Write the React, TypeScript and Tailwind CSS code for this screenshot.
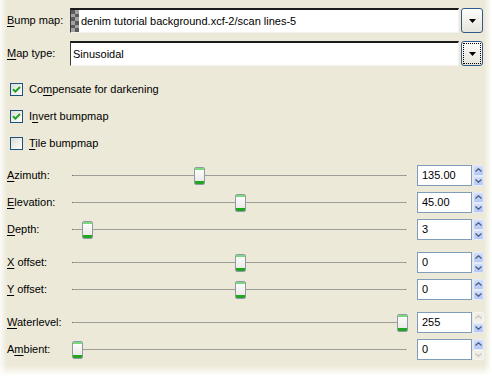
import React from 'react';

// slider rows, grouped like the dialog
const sliderGroups = [
  [
    { pre: '', key: 'A', post: 'zimuth:', value: '135.00', frac: 135 / 360, up: true, down: true },
    { pre: '', key: 'E', post: 'levation:', value: '45.00', frac: 0.5, up: true, down: true },
    { pre: '', key: 'D', post: 'epth:', value: '3', frac: 2 / 64, up: true, down: true },
  ],
  [
    { pre: '', key: 'X', post: ' offset:', value: '0', frac: 0.5, up: true, down: true },
    { pre: '', key: 'Y', post: ' offset:', value: '0', frac: 0.5, up: true, down: true },
  ],
  [
    { pre: '', key: 'W', post: 'aterlevel:', value: '255', frac: 1, up: false, down: true },
    { pre: 'A', key: 'm', post: 'bient:', value: '0', frac: 0, up: true, down: false },
  ],
];

const checks = [
  { pre: 'Co', key: 'm', post: 'pensate for darkening', checked: true },
  { pre: 'I', key: 'n', post: 'vert bumpmap', checked: true },
  { pre: '', key: 'T', post: 'ile bumpmap', checked: false },
];

function Label({ pre, k, post }: { pre: string; k: string; post: string }) {
  return (
    <span className="whitespace-pre">
      {pre}
      <span className="underline underline-offset-[2px]">{k}</span>
      {post}
    </span>
  );
}

function ComboButton({ focused }: { focused?: boolean }) {
  return (
    <div className="ml-[2px] mr-[1px] w-[22px] h-[25px] rounded-[3px] border border-[#2E5A8C] bg-gradient-to-b from-[#FDFDFB] to-[#E6E4DA] flex items-center justify-center">
      <div
        className={
          focused
            ? 'w-[18px] h-[21px] border border-dotted border-black flex items-center justify-center'
            : 'flex items-center justify-center'
        }
      >
        <svg width="7" height="4" viewBox="0 0 7 4">
          <path d="M0 0h7L3.5 4z" fill="#000" />
        </svg>
      </div>
    </div>
  );
}

function SpinHalf({ dir, enabled }: { dir: 'up' | 'down'; enabled: boolean }) {
  return (
    <div
      className={
        enabled
          ? 'flex-1 rounded-[2px] border border-[#E4EBFD] bg-gradient-to-b from-[#D2DEFC] to-[#B4C7F5] flex items-center justify-center'
          : 'flex-1 rounded-[2px] border border-[#F7F6F1] bg-[#EFEEE8] flex items-center justify-center'
      }
    >
      <svg width="7" height="4" viewBox="0 0 7 4">
        <path
          d={dir === 'up' ? 'M0.5 3.5L3.5 0.8L6.5 3.5' : 'M0.5 0.5L3.5 3.2L6.5 0.5'}
          fill="none"
          stroke={enabled ? '#4D6185' : '#C9C8C0'}
          strokeWidth="1.4"
        />
      </svg>
    </div>
  );
}

function SliderRow({ row }: { row: (typeof sliderGroups)[number][number] }) {
  return (
    <div className="flex items-center h-[21px]">
      <div className="w-[65px]">
        <Label pre={row.pre} k={row.key} post={row.post} />
      </div>
      <div className="relative flex-1 h-full flex items-center">
        <div className="w-full h-px bg-[#9D9D99]" />
        <div className="absolute left-0 top-[10px] w-px h-px bg-[#6B6B68]" />
        <div className="absolute right-0 top-[10px] w-px h-px bg-[#FFFFFF]" />
        <div
          className="absolute top-[2px] w-[11px] h-[18px] rounded-[2px] border border-[#8E9BA6] bg-gradient-to-b from-[#FFFFFF] to-[#E7E6E0] flex flex-col justify-between overflow-hidden"
          style={{ left: Math.round(row.frac * 325) }}
        >
          <div className="h-[2px] bg-[#7BD97C]" />
          <div className="h-[3px] bg-[#22A622]" />
        </div>
      </div>
      <div className="ml-[9px] w-[55px] h-[21px] border border-[#7F9DB9] bg-white pl-[4px] flex items-center">
        {row.value}
      </div>
      <div className="ml-px w-[11px] h-[21px] flex flex-col">
        <SpinHalf dir="up" enabled={row.up} />
        <SpinHalf dir="down" enabled={row.down} />
      </div>
    </div>
  );
}

export default function App() {
  return (
    <div className="relative w-[492px] h-[376px] overflow-hidden bg-[#ECE9D8] pt-[8px] pl-[7px] pr-[8px] text-[11px] text-black font-['Liberation_Sans',Arial,sans-serif]">
      {/* bump map */}
      <div className="flex items-center h-[25px]">
        <div className="w-[63px]">
          <Label pre="" k="B" post="ump map:" />
        </div>
        <div className="flex-1 h-[25px] bg-white border-t-2 border-l border-t-[#1B1B1B] border-l-[#3A3A3A] border-b border-r border-b-[#F3F2EC] border-r-[#F3F2EC] flex items-center">
          <div className="w-[8px] h-full grid grid-cols-2 grid-rows-6">
            {Array.from({ length: 12 }).map((_, i) => (
              <div
                key={i}
                className={(Math.floor(i / 2) + i) % 2 === 0 ? 'bg-[#5C5C5C]' : 'bg-[#A3A3A3]'}
              />
            ))}
          </div>
          <span className="ml-[2px]">denim tutorial background.xcf-2/scan lines-5</span>
        </div>
        <ComboButton />
      </div>

      {/* map type */}
      <div className="flex items-center h-[25px] mt-[8px]">
        <div className="w-[63px]">
          <Label pre="" k="M" post="ap type:" />
        </div>
        <div className="flex-1 h-[25px] bg-white border-t-2 border-l border-t-[#1B1B1B] border-l-[#3A3A3A] border-b border-r border-b-[#F3F2EC] border-r-[#F3F2EC] flex items-center pl-[2px]">
          Sinusoidal
        </div>
        <ComboButton focused />
      </div>

      {/* checkboxes */}
      <div className="flex flex-col gap-[14px] mt-[17px]">
        {checks.map((c, i) => (
          <div key={i} className="flex items-center h-[13px] ml-[3px]">
            <div className="w-[13px] h-[13px] border border-[#1C5180] bg-gradient-to-br from-[#DCDCD5] to-[#FFFFFF] flex items-center justify-center">
              {c.checked && (
                <svg width="9" height="9" viewBox="0 0 9 9">
                  <path d="M1 4.2L3.4 6.6L8 2" fill="none" stroke="#21A121" strokeWidth="2" />
                </svg>
              )}
            </div>
            <div className="ml-[6px]">
              <Label pre={c.pre} k={c.key} post={c.post} />
            </div>
          </div>
        ))}
      </div>

      {/* sliders */}
      <div className="flex flex-col gap-[12px] mt-[15px]">
        {sliderGroups.map((g, gi) => (
          <div key={gi} className="flex flex-col gap-[6px]">
            {g.map((row, ri) => (
              <SliderRow key={ri} row={row} />
            ))}
          </div>
        ))}
      </div>

      {/* soft window edges */}
      <div className="pointer-events-none absolute left-0 top-0 bottom-0 w-[7px] bg-gradient-to-r from-[#FFFFFF] to-transparent opacity-80" />
      <div className="pointer-events-none absolute right-0 top-0 bottom-0 w-[8px] bg-gradient-to-l from-[#FFFFFF] to-transparent" />
      <div className="pointer-events-none absolute left-0 right-0 bottom-0 h-[11px] bg-gradient-to-t from-[#FFFFFF] to-transparent" />
    </div>
  );
}
